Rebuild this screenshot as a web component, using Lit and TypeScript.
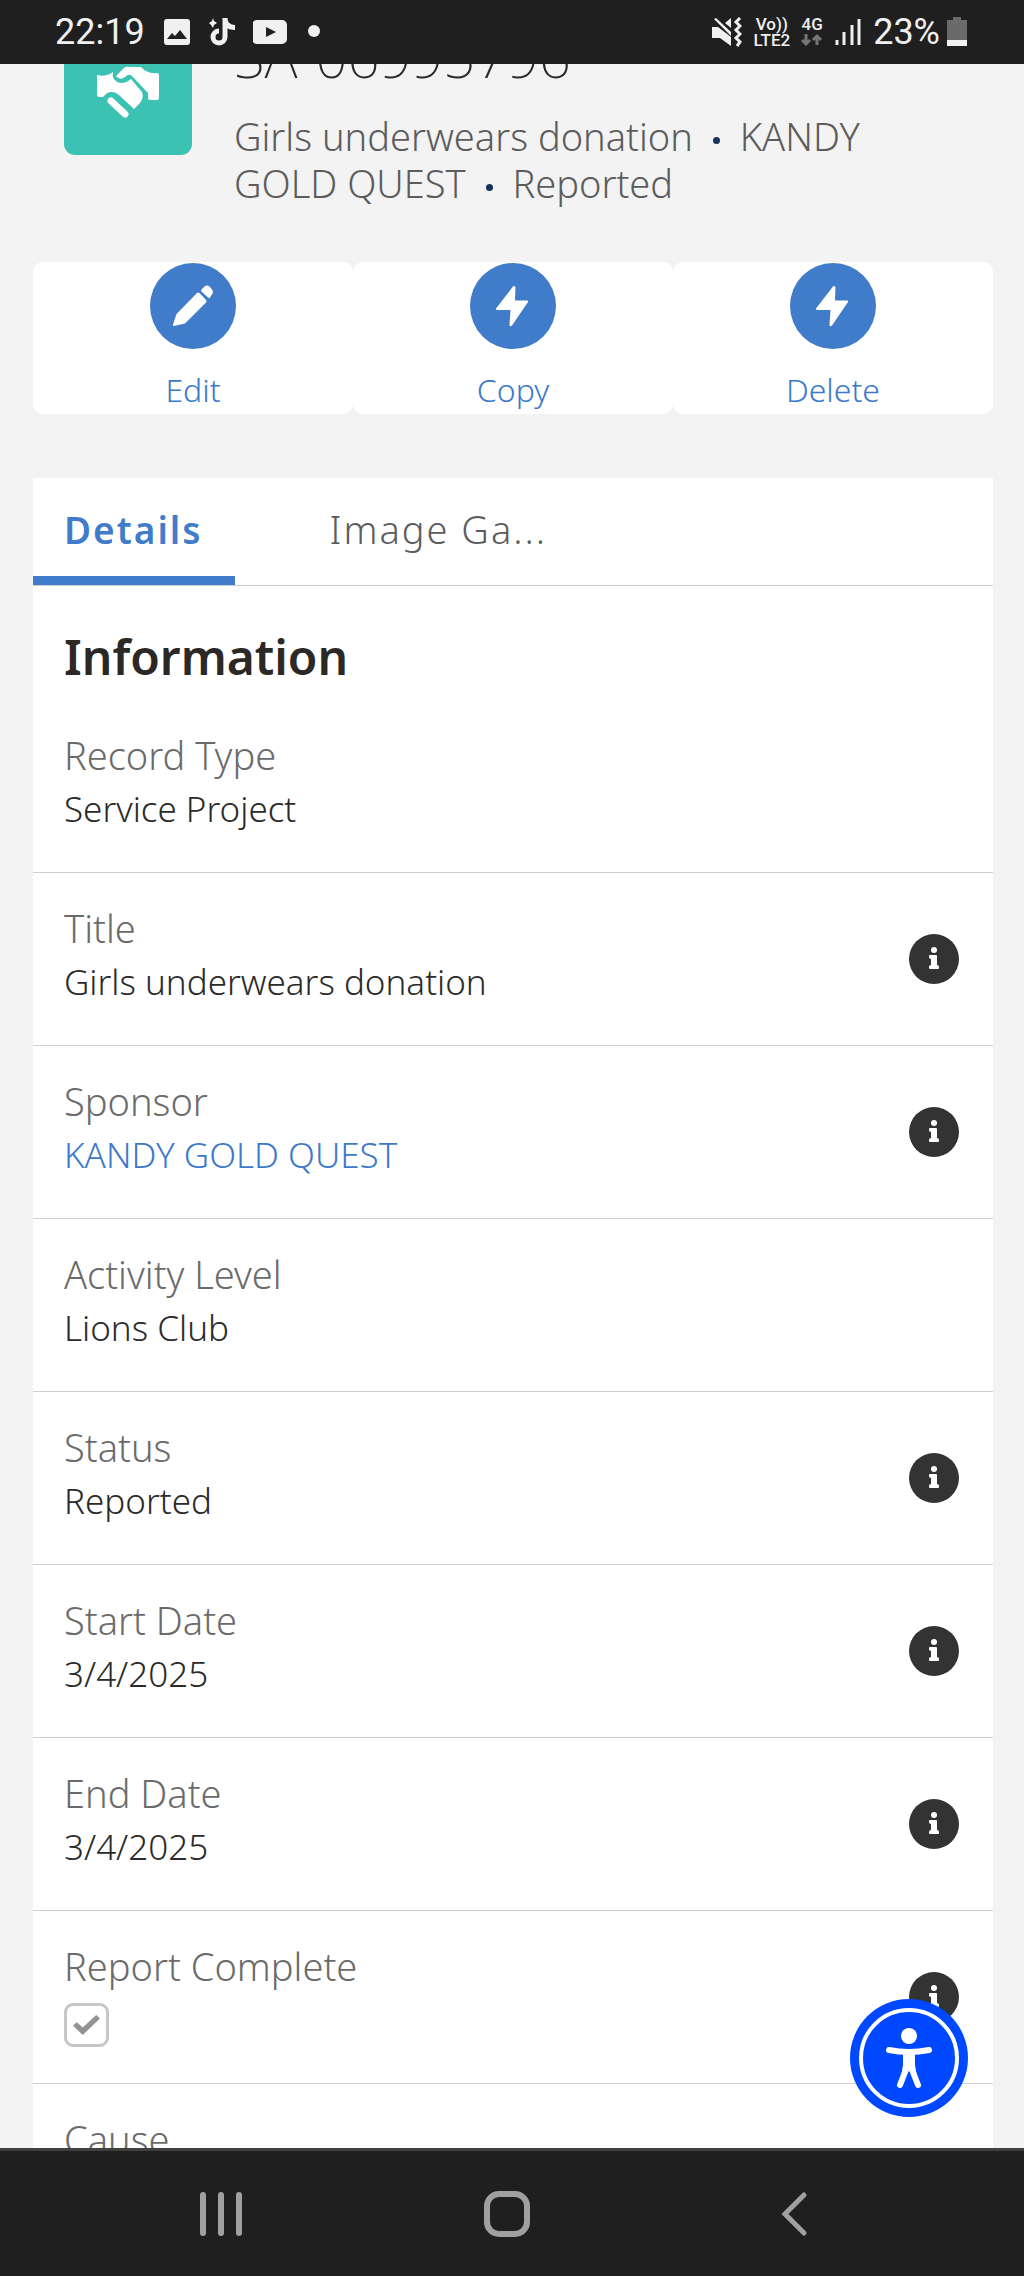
import { LitElement, html, css, svg, nothing } from "lit";
import { customElement, property } from "lit/decorators.js";

interface Field {
  label: string;
  value?: string;
  href?: string;
  checked?: boolean;
  help?: boolean;
}

const FIELDS: Field[] = [
  { label: "Record Type", value: "Service Project" },
  { label: "Title", value: "Girls underwears donation", help: true },
  { label: "Sponsor", value: "KANDY GOLD QUEST", href: "#sponsor", help: true },
  { label: "Activity Level", value: "Lions Club" },
  { label: "Status", value: "Reported", help: true },
  { label: "Start Date", value: "3/4/2025", help: true },
  { label: "End Date", value: "3/4/2025", help: true },
  { label: "Report Complete", checked: true, help: true },
  { label: "Cause", value: "" },
];

const bolt = svg`<path d="M43 23.5 L26 45.5 Q26 47 27 47 H40.5 L39.5 62 Q40 64 42 62.5 L58 39 Q58.5 37.5 57 37.5 H45 L45.5 24 Q44.5 22.5 43 23.5 Z" fill="#fff"/>`;
const pencil = svg`<path d="M47 30 Q48 29 49.5 30 L56 37 Q57 38.5 56 39.5 L35 60.5 L24 63 Q22.5 63 23 61.5 L26.5 51 Z M51.5 26.5 L54.5 23.5 Q57 21.5 60 24 L62 26.5 Q64 29 62 31.5 L60 34.5 Q59 35.5 58 34.5 L51.5 28.5 Q50.5 27.5 51.5 26.5 Z" fill="#fff"/>`;

@customElement("status-bar")
export class StatusBar extends LitElement {
  static styles = css`
    :host {
      display: flex;
      align-items: center;
      justify-content: space-between;
      height: 64px;
      padding: 0 55px;
      background: #1f1f1f;
      color: #f0f0f0;
      font-family: Roboto, "Liberation Sans", sans-serif;
      font-size: 36px;
      line-height: 64px;
    }
    .group {
      display: flex;
      align-items: center;
    }
    .left {
      gap: 18px;
    }
    .right {
      gap: 11px;
      padding-right: 2px;
    }
    .stack {
      display: flex;
      flex-direction: column;
      align-items: center;
      font-size: 17px;
      font-weight: 500;
      line-height: 16px;
    }
    svg {
      display: block;
    }
    .power {
      display: flex;
      align-items: center;
      gap: 7px;
    }
  `;

  render() {
    return html`
      <div class="group left">
        <span>22:19</span>
        <svg width="28" height="28" viewBox="0 0 28 28">
          <rect x="1" y="1" width="26" height="26" rx="3" fill="#f0f0f0" />
          <path d="M4 21 L9 15 L12 18 L17 12 L24 21 Z" fill="#1f1f1f" />
        </svg>
        <svg width="26" height="30" viewBox="0 0 26 30">
          <path d="M16 1 V20 A6 6 0 1 1 10 14" fill="none" stroke="#f0f0f0" stroke-width="5" />
          <path d="M14 1 H18 Q19 8 26 8 V13 Q20 13 16 10 Z M4 1 L5 4 L8 6 L5 8 L4 11 L2 8 L0 6 L3 4 Z" fill="#f0f0f0" />
        </svg>
        <svg width="80" height="26" viewBox="0 0 80 26">
          <rect width="35" height="24" x="-1" y="1" rx="5" fill="#f0f0f0" />
          <path d="M13 8 L23 13 L13 18 Z" fill="#1f1f1f" />
          <circle cx="61" cy="12" r="6" fill="#f0f0f0" />
        </svg>
      </div>
      <div class="group right">
        <svg width="30" height="30" viewBox="0 0 30 30">
          <path d="M0 10 H6 L19 20 V29 L8 21 H0 Z M2 2 L4 1 L19 15 V19 Z M13 6 L19 1 V11 Z" fill="#f0f0f0" />
          <path d="M28 1 L24 5 L28 9 L24 13 L28 17 L24 21 L28 25 L25 29" fill="none" stroke="#f0f0f0" stroke-width="3" />
        </svg>
        <span class="stack"><span>Vo))</span><span>LTE2</span></span>
        <span class="stack">
          <span>4G</span>
          <svg width="22" height="16" viewBox="0 0 22 16">
            <path d="M5 2 V12 M1 8 L5 12 L9 8 M16 13 V4 M12 8 L16 4 L20 8" fill="none" stroke="#757575" stroke-width="3" />
          </svg>
        </span>
        <svg width="28" height="28" viewBox="0 0 28 28">
          <path d="M3 22 V27 M10 14 V27 M18 7 V27 M25 1 V27" stroke="#f0f0f0" stroke-width="3" />
        </svg>
        <span class="power">
          <span>23%</span>
          <svg width="20" height="30" viewBox="0 0 20 30">
            <path d="M6 0 H14 V3 H20 V24 H0 V3 H6 Z" fill="#6a6a6a" />
            <path d="M0 23 H20 V29 H0 Z" fill="#f0f0f0" />
          </svg>
        </span>
      </div>
    `;
  }
}

@customElement("record-field")
export class RecordField extends LitElement {
  @property({ attribute: false }) field!: Field;

  static styles = css`
    :host {
      display: flex;
      align-items: center;
      justify-content: space-between;
      padding: 0 32px 0 31px;
      border-bottom: 1px solid #cfcfcf;
    }
    .text {
      display: flex;
      flex-direction: column;
      padding: 28px 0 36px;
    }
    .label {
      font-size: 38px;
      font-weight: 350;
      line-height: 54px;
      color: #6b6b6b;
    }
    .value {
      display: flex;
      align-items: flex-end;
      height: 54px;
      font-size: 35px;
      font-weight: 350;
      line-height: 54px;
      color: #2b2b2b;
    }
    a {
      color: #3d79ca;
      text-decoration: none;
    }
    .check {
      appearance: none;
      box-sizing: border-box;
      width: 45px;
      height: 44px;
      margin: 0;
      border: 3px solid #c6c6c6;
      border-radius: 9px;
      background: #fff;
      display: grid;
      place-items: center;
    }
    .check::before {
      content: "";
      width: 27px;
      height: 20px;
      background: #939393;
      clip-path: polygon(0 52%, 14% 36%, 36% 62%, 86% 0, 100% 18%, 36% 100%);
    }
    .help {
      width: 54px;
      height: 54px;
      padding: 0;
      border: 0;
      background: none;
    }
    svg {
      display: block;
    }
  `;

  render() {
    const f = this.field;
    const value = f.href ? html`<a href=${f.href}>${f.value}</a>` : f.value;
    return html`
      <div class="text">
        ${f.checked === undefined
          ? html`<span class="label">${f.label}</span><span class="value">${value}</span>`
          : html`<label class="label" for="check">${f.label}</label>
              <span class="value"><input class="check" id="check" type="checkbox" .checked=${f.checked} /></span>`}
      </div>
      ${f.help
        ? html`<button class="help" aria-label="Help">
            <svg width="54" height="54" viewBox="0 0 54 54">
              <circle cx="27" cy="27" r="25" fill="#333" />
              <circle cx="27" cy="18" r="3" fill="#fff" />
              <path d="M22 24 Q22 23 23 23 H29 Q30 23 30 24 V33 Q32 33 32 35 V36 Q32 37 31 37 H23 Q22 37 22 36 V35 Q22 33 24 33 V27 Q22 27 22 25 Z" fill="#fff" />
            </svg>
          </button>`
        : nothing}
    `;
  }
}

@customElement("app-root")
export class AppRoot extends LitElement {
  static styles = css`
    :host {
      display: grid;
      grid-template-rows: auto minmax(0, 1fr) auto;
      height: 100vh;
      background: #f3f3f3;
      font-family: "Noto Sans", "Open Sans", sans-serif;
    }
    .viewport {
      position: relative;
      overflow: hidden;
    }
    /* the record is scrolled a little way under the status bar */
    .page {
      margin-top: -37px;
      padding: 0 31px 0 33px;
    }
    .header {
      display: flex;
      gap: 42px;
      padding: 0 31px;
    }
    .tile {
      flex: none;
      width: 128px;
      height: 128px;
      border-radius: 11px;
      background: #3bc2b3;
    }
    .tile svg,
    .disc svg,
    .nav svg,
    .fab svg {
      display: block;
    }
    .title {
      margin: 0 0 28px;
      font-size: 56px;
      font-weight: 200;
      line-height: 58px;
      color: #2b2826;
    }
    .summary {
      margin: 0;
      max-width: 660px;
      font-size: 38px;
      font-weight: 300;
      line-height: 47px;
      color: #5c5c5c;
    }
    .dot {
      display: inline-block;
      width: 7px;
      height: 7px;
      margin: 0 10px 7px;
      border-radius: 50%;
      background: #16325c;
    }
    .actions {
      display: grid;
      grid-template-columns: repeat(3, 1fr);
      margin: 55px 0 64px;
    }
    .action {
      display: flex;
      flex-direction: column;
      align-items: center;
      gap: 19px;
      padding: 1px 0 2px;
      border: 0;
      border-radius: 10px;
      background: #fff;
      color: #3d79ca;
      font: inherit;
      font-size: 32px;
      font-weight: 350;
      line-height: 44px;
    }
    .disc {
      width: 86px;
      height: 86px;
      border-radius: 50%;
      background: #417ccb;
    }
    .card {
      background: #fff;
    }
    .tabs {
      display: flex;
      gap: 64px;
      border-bottom: 1px solid #cfcfcf;
    }
    .tab {
      padding: 7px 32px 2px 31px;
      border: 0;
      border-bottom: 9px solid transparent;
      background: none;
      color: #5c5c5c;
      font: inherit;
      font-size: 38px;
      font-weight: 300;
      line-height: 89px;
      letter-spacing: 2px;
    }
    .tab.active {
      border-bottom-color: #417ccb;
      color: #417ccb;
      font-size: 37px;
      font-weight: 600;
    }
    .section {
      margin: 0;
      padding: 39px 31px 11px;
      font-size: 48px;
      font-weight: 600;
      line-height: 64px;
      color: #2b2826;
    }
    .fab {
      position: absolute;
      right: 56px;
      bottom: 31px;
      padding: 0;
      border: 0;
      border-radius: 50%;
      background: none;
    }
    .nav {
      display: grid;
      grid-template-columns: repeat(3, 1fr);
      padding: 0 87px 0 78px;
      border-top: 3px solid #404040;
      background: #1f1f1f;
    }
    .nav button {
      display: grid;
      place-items: center;
      height: 125px;
      padding: 0;
      border: 0;
      background: none;
    }
  `;

  private action(label: string, icon: unknown) {
    return html`<button class="action">
      <span class="disc"><svg width="86" height="86" viewBox="0 0 86 86">${icon}</svg></span>
      <span>${label}</span>
    </button>`;
  }

  render() {
    return html`
      <status-bar></status-bar>
      <main class="viewport">
        <div class="page">
          <header class="header">
            <div class="tile">
              <svg width="128" height="128" viewBox="0 0 128 128" fill="#fff">
                <path d="M33 48 Q40 50 46 47 L49 45 Q47 54 57 56 Q62 56 67 52 L78 65 Q80 71 76 76 L70 82 L56 69 Q50 63 43 66 L39 70 H35 Q33 70 33 68 Z" />
                <path d="M52 49 L60 41 Q62 39 66 40 H77 Q83 47 93 46 Q95 46 95 48 V71 Q95 73 93 73 H86 Q84 73 84 71 V66 L68 49 Q65 46 61 50 Q56 54 52 49 Z" />
                <path d="M47 74 L61 87" stroke="#fff" stroke-width="7" stroke-linecap="round" />
              </svg>
            </div>
            <div>
              <h1 class="title">SA-06995796</h1>
              <p class="summary">
                Girls underwears donation <span class="dot"></span> KANDY GOLD QUEST
                <span class="dot"></span> Reported
              </p>
            </div>
          </header>
          <div class="actions">
            ${this.action("Edit", pencil)} ${this.action("Copy", bolt)} ${this.action("Delete", bolt)}
          </div>
          <section class="card">
            <div class="tabs" role="tablist">
              <button class="tab active" role="tab" aria-selected="true">Details</button>
              <button class="tab" role="tab" aria-selected="false">Image Ga...</button>
            </div>
            <h2 class="section">Information</h2>
            ${FIELDS.map((f) => html`<record-field .field=${f}></record-field>`)}
          </section>
        </div>
        <button class="fab" aria-label="Accessibility menu">
          <svg width="118" height="118" viewBox="0 0 118 118">
            <circle cx="59" cy="59" r="59" fill="#0048ff" />
            <circle cx="59" cy="59" r="48" fill="none" stroke="#fff" stroke-width="4" />
            <circle cx="59" cy="37" r="8" fill="#fff" />
            <path d="M39 51 Q59 55 79 51 M60 55 L59 68 M57 68 L50 86 M61 68 L68 86" fill="none" stroke="#fff" stroke-width="6" stroke-linecap="round" />
            <path d="M53 54 H65 V66 L67 78 L59 72 L51 78 L53 66 Z" fill="#fff" />
          </svg>
        </button>
      </main>
      <nav class="nav">
        <button aria-label="Recent apps">
          <svg width="44" height="46" viewBox="0 0 44 46">
            <path d="M4 4 V42 M22 4 V42 M40 4 V42" stroke="#a0a0a0" stroke-width="6" stroke-linecap="round" />
          </svg>
        </button>
        <button aria-label="Home">
          <svg width="48" height="48" viewBox="0 0 48 48">
            <rect x="4" y="4" width="40" height="40" rx="12" fill="none" stroke="#a0a0a0" stroke-width="6" />
          </svg>
        </button>
        <button aria-label="Back">
          <svg width="28" height="46" viewBox="0 0 28 46">
            <path d="M24 4 L5 23 L24 42" fill="none" stroke="#a0a0a0" stroke-width="5" stroke-linecap="round" />
          </svg>
        </button>
      </nav>
    `;
  }
}
